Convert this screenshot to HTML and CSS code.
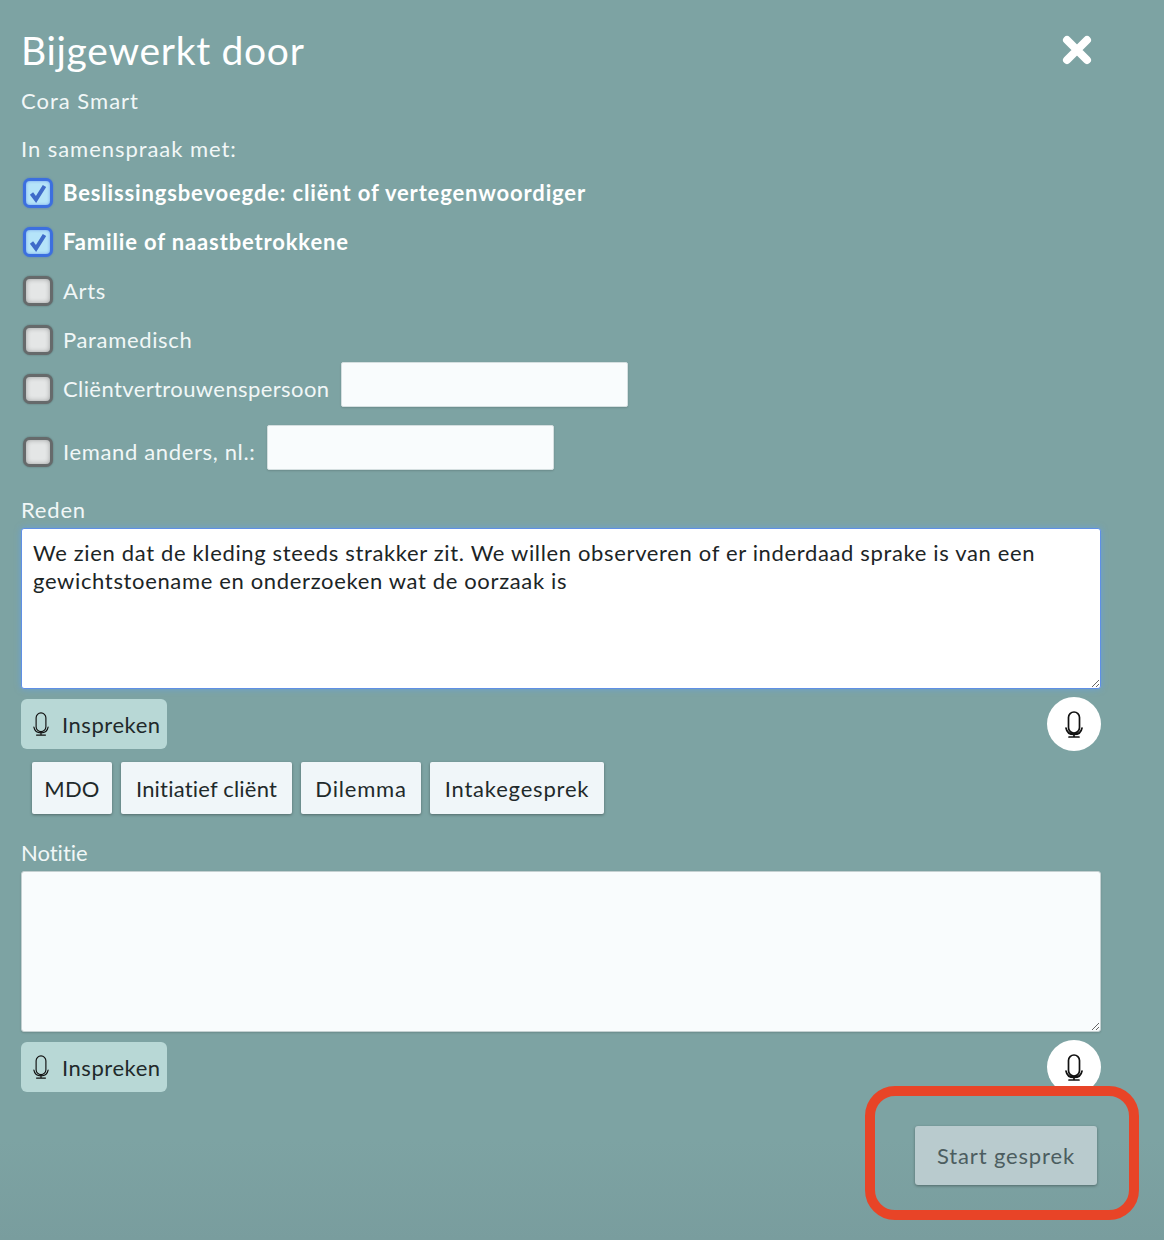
FILE: index.html
```html
<!DOCTYPE html>
<html lang="nl">
<head>
  <meta charset="UTF-8" />
  <title>Bijgewerkt door</title>
  <meta name="viewport" content="width=device-width, initial-scale=1.0"/>
  <link rel="stylesheet" href="styles.css">
</head>
<body>

<div class="modal">
  <div class="modal-head">
    <h1>Bijgewerkt door</h1>
    <svg class="close" width="30" height="30" viewBox="0 0 30 30"><path d="M5 5l20 20M25 5L5 25"/></svg>
  </div>
  <p class="author">Cora Smart</p>
  <p class="intro">In samenspraak met:</p>

  <div class="check-row selected">
    <span class="box"><svg width="22" height="22" viewBox="0 0 22 22"><path d="M4.500 11.500l4.500 6L17.500 4"/></svg></span>
    <span>Beslissingsbevoegde: cliënt of vertegenwoordiger</span>
  </div>
  <div class="check-row selected">
    <span class="box"><svg width="22" height="22" viewBox="0 0 22 22"><path d="M4.500 11.500l4.500 6L17.500 4"/></svg></span>
    <span>Familie of naastbetrokkene</span>
  </div>
  <div class="check-row"><span class="box"></span><span>Arts</span></div>
  <div class="check-row"><span class="box"></span><span>Paramedisch</span></div>
  <div class="check-row">
    <span class="box"></span><span class="label-long">Cliëntvertrouwenspersoon</span>
    <input type="text" class="other-input">
  </div>
  <div class="check-row last">
    <span class="box"></span><span>Iemand anders, nl.:</span>
    <input type="text" class="other-input">
  </div>

  <label class="field-label">Reden</label>
  <textarea class="field focused">We zien dat de kleding steeds strakker zit. We willen observeren of er inderdaad sprake is van een gewichtstoename en onderzoeken wat de oorzaak is</textarea>
  <div class="speak-row">
    <button class="speak-btn">
      <svg class="mic thin" width="18" height="24" viewBox="0 0 18 27"><path d="M9 1a5.500 5.500 0 0 1 5.500 5.500v10a5.500 5.500 0 0 1-11 0v-10A5.500 5.500 0 0 1 9 1zM1 17c.8 4.500 4 6.500 8 6.500s7.200-2 8-6.500M9 23.500V26M4 26h10"/></svg>
      Inspreken
    </button>
    <span class="mic-round">
      <svg class="mic" width="18" height="27" viewBox="0 0 18 27"><path d="M9 1a5.500 5.500 0 0 1 5.500 5.500v10a5.500 5.500 0 0 1-11 0v-10A5.500 5.500 0 0 1 9 1zM1 17c.8 4.500 4 6.500 8 6.500s7.200-2 8-6.500M9 23.500V26M4 26h10"/></svg>
    </span>
  </div>

  <div class="chips">
    <button class="chip tight">MDO</button>
    <button class="chip tight">Initiatief cliënt</button>
    <button class="chip">Dilemma</button>
    <button class="chip">Intakegesprek</button>
  </div>

  <label class="field-label notitie">Notitie</label>
  <textarea class="field"></textarea>
  <div class="speak-row">
    <button class="speak-btn">
      <svg class="mic thin" width="18" height="24" viewBox="0 0 18 27"><path d="M9 1a5.500 5.500 0 0 1 5.500 5.500v10a5.500 5.500 0 0 1-11 0v-10A5.500 5.500 0 0 1 9 1zM1 17c.8 4.500 4 6.500 8 6.500s7.200-2 8-6.500M9 23.500V26M4 26h10"/></svg>
      Inspreken
    </button>
    <span class="mic-round">
      <svg class="mic" width="18" height="27" viewBox="0 0 18 27"><path d="M9 1a5.500 5.500 0 0 1 5.500 5.500v10a5.500 5.500 0 0 1-11 0v-10A5.500 5.500 0 0 1 9 1zM1 17c.8 4.500 4 6.500 8 6.500s7.200-2 8-6.500M9 23.500V26M4 26h10"/></svg>
    </span>
  </div>

  <div class="actions">
    <button class="start-btn">Start gesprek</button>
  </div>
</div>

<div class="highlight-ring"></div>

</body>
</html>
```

FILE: styles.css
```css
html, body {
  height: 1240px;
  overflow: hidden;
}

body {
  font-family: 'Lato', 'Open Sans', sans-serif;
  margin: 0;
  background: linear-gradient(#7da3a3 0, #7da3a3 1140px, #799d9e 1240px);
  color: #f1f7f7;
  position: relative;
}

.modal {
  width: 1080px;
  padding: 0 0 0 21px;
  font-size: 22px;
  letter-spacing: 0.8px;
}

.modal-head {
  display: flex;
  justify-content: space-between;
  align-items: center;
  height: 100px;
  padding-right: 9px;
  box-sizing: border-box;
}

h1 {
  margin: 0;
  font-size: 39px;
  font-weight: 400;
  letter-spacing: 0.7px;
  color: white;
}

.close path {
  fill: none;
  stroke: white;
  stroke-width: 8;
  stroke-linecap: round;
}

.author {
  margin: -13px 0 0;
  height: 28px;
  line-height: 28px;
  letter-spacing: 1px;
}

.intro {
  margin: 20px 0 5px;
  height: 28px;
  line-height: 28px;
  letter-spacing: 0.95px;
}

.check-row {
  display: flex;
  align-items: center;
  height: 49px;
  padding-left: 2px;
  letter-spacing: 0.65px;
}

.box {
  width: 30px;
  height: 30px;
  box-sizing: border-box;
  border: 3px solid #666a6b;
  border-radius: 7px;
  background: #e4e6e6;
  box-shadow: inset 0 0 5px rgba(0,0,0,0.3), 0 0 2px rgba(0,0,0,0.3);
  margin-right: 10px;
  flex-shrink: 0;
  display: flex;
  align-items: center;
  justify-content: center;
}

.selected {
  font-weight: 700;
  color: white;
  letter-spacing: 0.85px;
}

.selected .box {
  border-color: #3c6fdf;
  background: #b5e4f9;
  box-shadow: inset 0 0 3px rgba(40,90,220,0.5), 0 0 2px rgba(40,90,220,0.5);
}

.box path {
  fill: none;
  stroke: #3f6bc9;
  stroke-width: 4;
}

.label-long {
  letter-spacing: 0.4px;
}

.other-input {
  width: 287px;
  height: 45px;
  box-sizing: border-box;
  margin: 0 0 8px 12px;
  border: 1px solid #d5dfe0;
  border-radius: 2px;
  background: #f9fcfd;
  box-shadow: 0 1px 2px rgba(0,0,0,0.15);
}

.last {
  height: 77px;
}

.field-label {
  display: block;
  height: 28px;
  line-height: 28px;
  margin-top: 6px;
}

.field {
  display: block;
  width: 1080px;
  height: 161px;
  box-sizing: border-box;
  margin: 4px 0 0 0;
  padding: 10px 11px;
  font-family: inherit;
  font-size: 22px;
  letter-spacing: 0.65px;
  line-height: 28px;
  color: #1c2526;
  background: #f9fcfd;
  border: 1px solid #c4d0d1;
  border-radius: 3px;
  box-shadow: 0 1px 2px rgba(0,0,0,0.15);
}

.focused {
  background: white;
  border-color: #5f8fe6;
  box-shadow: 0 0 6px rgba(100,160,235,0.7);
}

.speak-row {
  display: flex;
  justify-content: space-between;
  align-items: center;
  height: 54px;
  margin-top: 8px;
}

.speak-btn {
  display: flex;
  align-items: center;
  gap: 12px;
  width: 146px;
  height: 50px;
  padding: 0 0 0 11px;
  font-family: inherit;
  font-size: 22px;
  letter-spacing: 0.55px;
  color: #1f2a2b;
  background: #b8d8d6;
  border: none;
  border-radius: 6px;
}

.mic path {
  fill: none;
  stroke: #111;
  stroke-width: 1.700;
  stroke-linecap: round;
}

.mic.thin path {
  stroke-width: 1.300;
}

.mic-round {
  width: 54px;
  height: 54px;
  border-radius: 50%;
  background: white;
  display: flex;
  align-items: center;
  justify-content: center;
}

.chips {
  display: grid;
  grid-template-columns: 80px 171px 120px 174px;
  gap: 9px;
  margin: 11px 0 0 11px;
}

.chip {
  height: 52px;
  padding: 0;
  font-family: inherit;
  font-size: 22px;
  letter-spacing: 0.8px;
  color: #1f2a2b;
  background: #f0f6f9;
  border: none;
  border-radius: 2px;
  box-shadow: 0 1px 3px rgba(0,0,0,0.35);
}

.chip.tight {
  letter-spacing: 0.2px;
}

.notitie {
  margin: 25px 0 1px;
  letter-spacing: 0;
  font-variant-ligatures: none;
}

.actions {
  display: flex;
  justify-content: flex-end;
  padding-right: 4px;
  margin-top: 32px;
}

.start-btn {
  width: 182px;
  height: 59px;
  font-family: inherit;
  font-size: 22px;
  letter-spacing: 0.85px;
  color: #4c5d60;
  background: #b9cbce;
  border: none;
  border-radius: 3px;
  box-shadow: 0 1px 3px rgba(0,0,0,0.35);
}

/* annotation drawn over the screenshot */
.highlight-ring {
  position: absolute;
  left: 865px;
  top: 1086px;
  width: 274px;
  height: 134px;
  box-sizing: border-box;
  border: 10px solid #e84427;
  border-radius: 30px;
}
```
